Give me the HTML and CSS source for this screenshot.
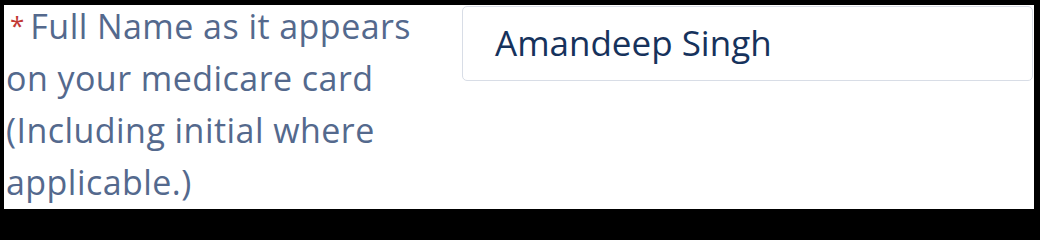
FILE: index.html
```html
<!DOCTYPE html>
<html lang="en">
<head>
<meta charset="utf-8">
<title>Full Name</title>
<link rel="stylesheet" href="styles.css">
</head>
<body>
<div class="frame">
  <div class="field">
    <label class="label">
      <span class="label-first"><abbr class="required" title="required">*</abbr><span class="label-lead">Full Name as it appears</span></span>
      <span class="label-rest">on your medicare card (Including initial where applicable.)</span>
    </label>
    <div class="control">
      <div class="input">Amandeep Singh</div>
    </div>
  </div>
</div>
</body>
</html>
```
FILE: styles.css
```css
html, body {
  margin: 0;
  padding: 0;
  background: #000;
}
.frame {
  box-sizing: border-box;
  width: 1040px;
  height: 215px;
  border-style: solid;
  border-color: #000;
  border-width: 5px 6px 6px 4px;
  background: #fff;
  overflow: hidden;
}
.field {
  display: grid;
  grid-template-columns: 422px 1fr;
  column-gap: 36px;
}
.label {
  display: block;
  margin-top: -5px;
  padding-left: 2px;
  font-family: "Open Sans", "Liberation Sans", sans-serif;
  font-size: 34px;
  letter-spacing: 0.45px;
  line-height: 52px;
  color: #54698d;
}
.label-first {
  display: flex;
  align-items: baseline;
}
.label-rest {
  display: block;
}
.required {
  color: #c23934;
  text-decoration: none;
  border: 0;
  font-size: 26px;
  line-height: 26px;
  position: relative;
  top: -4px;
  margin: 0 6px 0 4px;
  letter-spacing: 0;
}
.control {
  padding-top: 1px;
  padding-right: 1px;
}
.input {
  box-sizing: border-box;
  height: 75px;
  border: 1px solid #d8dde6;
  border-radius: 5px;
  padding: 0 0 2px 32px;
  font-family: "Open Sans", "Liberation Sans", sans-serif;
  font-size: 35px;
  line-height: 71px;
  color: #16325c;
}
```
